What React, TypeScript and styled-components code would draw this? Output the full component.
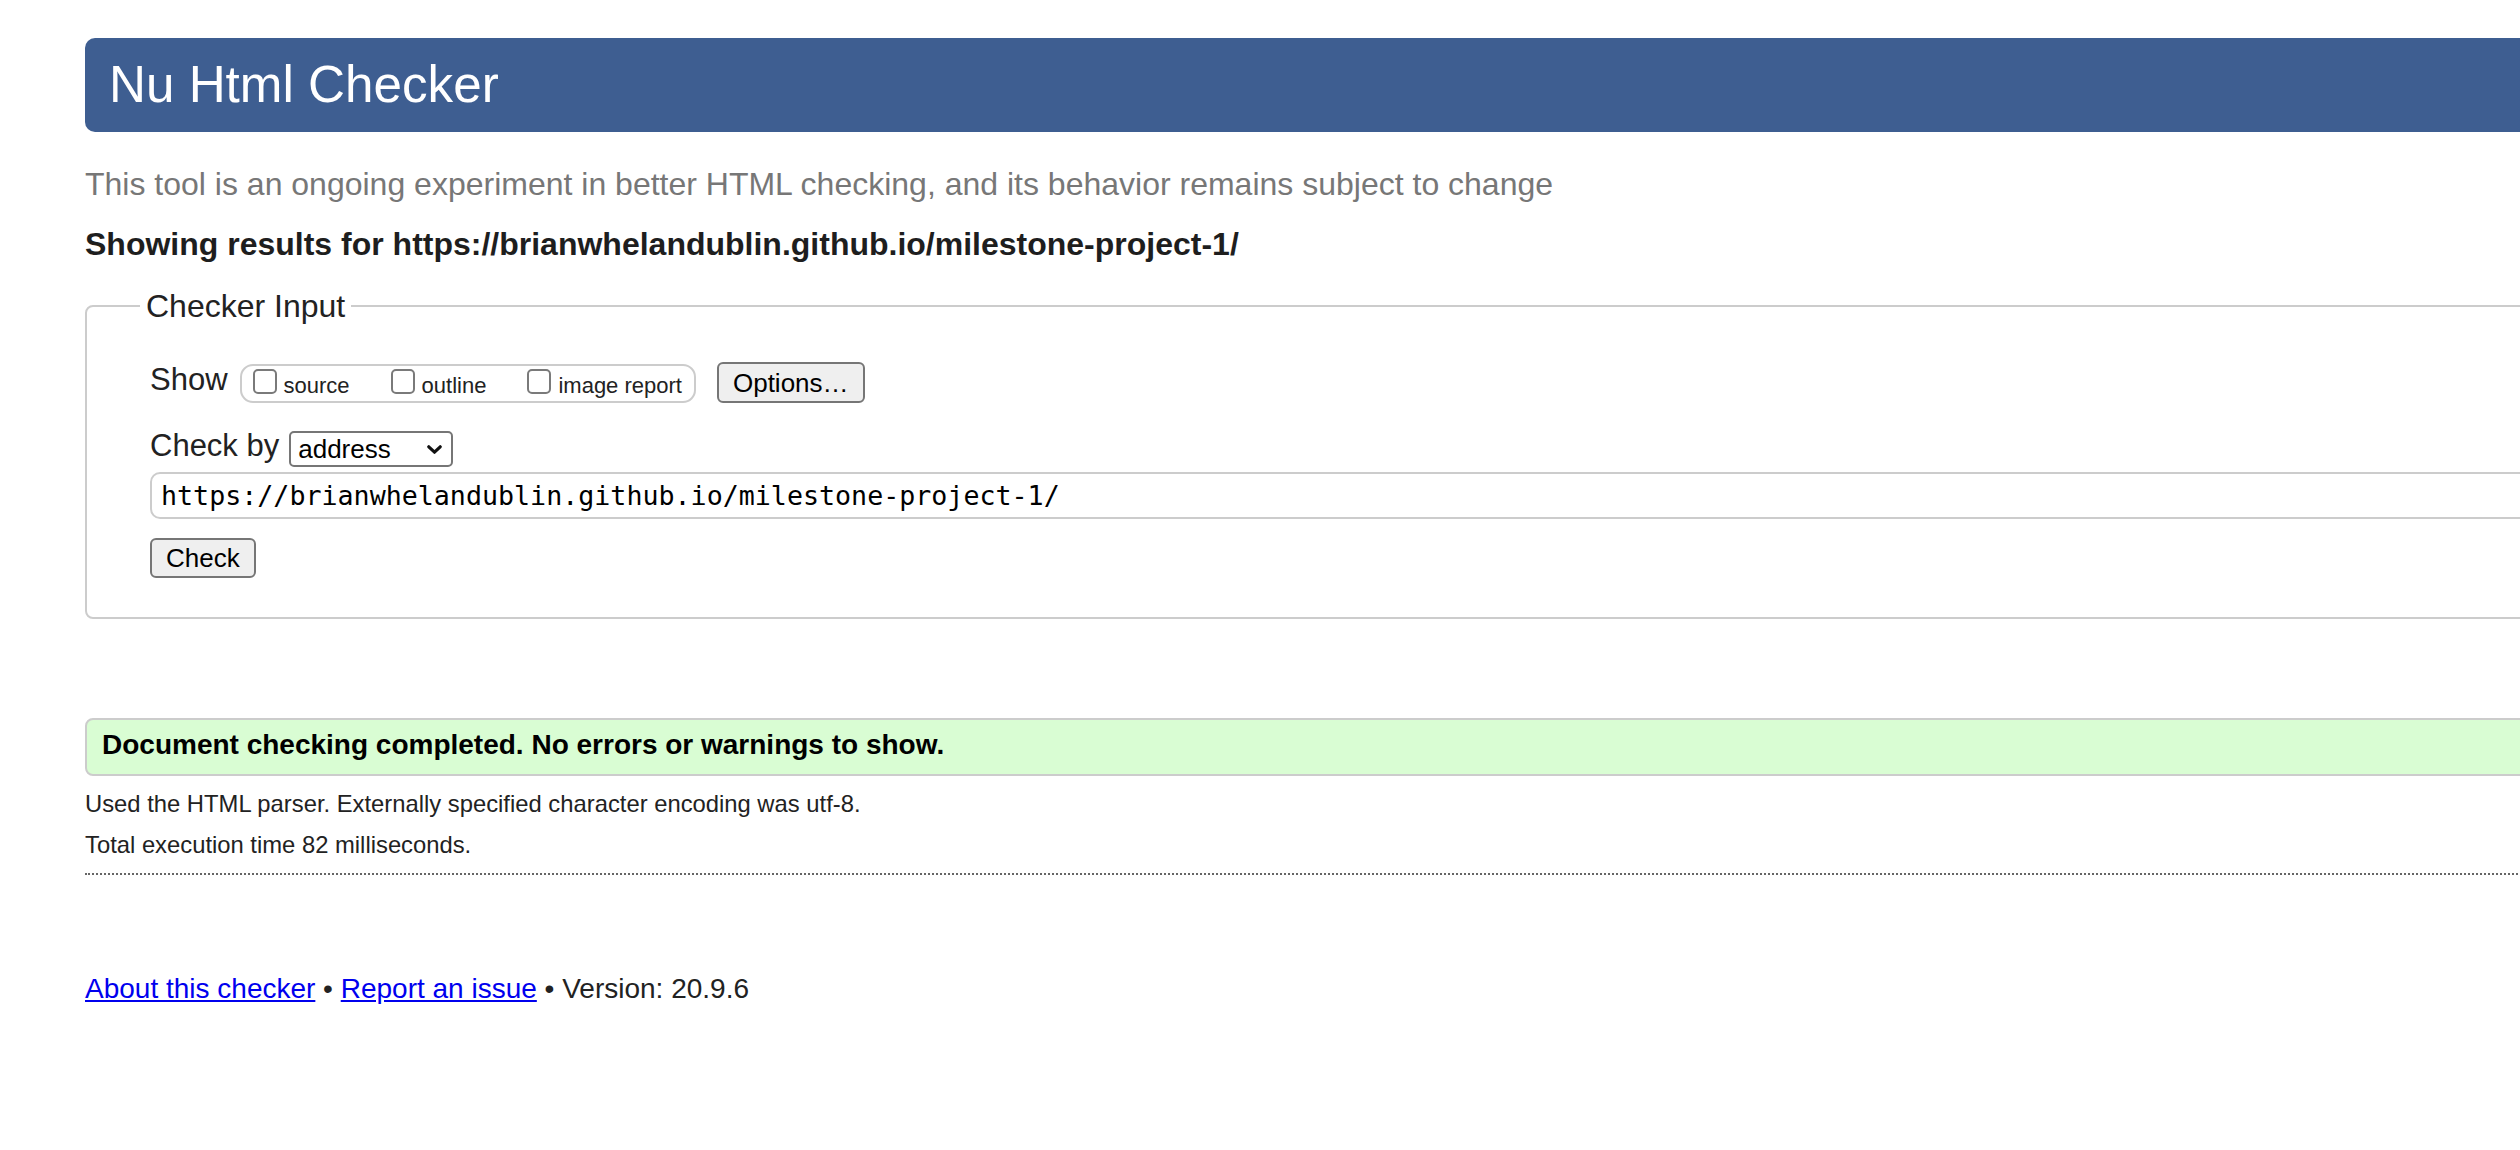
import React from 'react';
import styled, {createGlobalStyle} from 'styled-components';


const GlobalStyle = createGlobalStyle`
    html, body {
        margin: 0;
        padding: 0;
        background: #fff;
        overflow: hidden;
    }

    body {
        font-family: "Liberation Sans", Arial, Helvetica, sans-serif;
        color: #222;
    }
`;

const App = () => {
    return <>
        <GlobalStyle/>
        <Page>
            <Title>Nu Html Checker</Title>
            <Intro>This tool is an ongoing experiment in better HTML checking, and its behavior remains subject to change</Intro>
            <ResultsFor>Showing results for https://brianwhelandublin.github.io/milestone-project-1/</ResultsFor>

            <InputFieldset>
                <Legend>Checker Input</Legend>

                <Row>
                    <FieldLabel>Show</FieldLabel>
                    <OptionGroup>
                        {['source', 'outline', 'image report'].map(name => (
                            <OptionLabel key={name}>
                                <Checkbox/>
                                <span>{name}</span>
                            </OptionLabel>
                        ))}
                    </OptionGroup>
                    <Button type="button" $height={41}>Options…</Button>
                </Row>

                <Row $top={28}>
                    <FieldLabel>Check by</FieldLabel>
                    <SelectWrap>
                        <Select defaultValue="address">
                            <option value="address">address</option>
                            <option value="file">file upload</option>
                            <option value="textarea">text input</option>
                        </Select>
                        <Chevron viewBox="0 0 15 9">
                            <path d="M1.8 1.8 L7.5 7.2 L13.2 1.8" fill="none" stroke="#111" strokeWidth="3.2"
                                  strokeLinecap="round" strokeLinejoin="round"/>
                        </Chevron>
                    </SelectWrap>
                </Row>

                <UrlInput type="url" defaultValue="https://brianwhelandublin.github.io/milestone-project-1/"/>

                <Row $top={19}>
                    <Button type="submit" $height={40}>Check</Button>
                </Row>
            </InputFieldset>

            <Success>Document checking completed. No errors or warnings to show.</Success>

            <MetaList>
                <Meta>Used the HTML parser. Externally specified character encoding was utf-8.</Meta>
                <Meta>Total execution time 82 milliseconds.</Meta>
            </MetaList>

            <Divider/>

            <Footer>
                <FooterLink href="#about">About this checker</FooterLink>
                {' • '}
                <FooterLink href="#issue">Report an issue</FooterLink>
                {' • Version: 20.9.6'}
            </Footer>
        </Page>
    </>;
};

export default App;



const Page = styled.div`
    width: 2700px;
    padding: 38px 0 0 85px;
`;

const Title = styled.h1`
    margin: 0;
    height: 94px;
    padding-left: 24px;
    border-radius: 10px;
    background-color: #3e5e91;
    color: #fff;
    font-size: 51.2px;
    font-weight: normal;
    line-height: 94px;
`;

const Intro = styled.p`
    margin: 34px 0 0;
    font-size: 32px;
    line-height: 36px;
    color: #777;
`;

const ResultsFor = styled.p`
    margin: 24px 0 0;
    font-size: 32px;
    line-height: 36px;
    font-weight: bold;
    color: #1e1e1e;
`;

const InputFieldset = styled.fieldset`
    margin: 26px 0 0;
    padding: 38px 0 39px 63px;
    min-width: 0;
    border: 2px solid #ccc;
    border-radius: 8px;
`;

const Legend = styled.legend`
    margin-left: -10px;
    padding: 0 6px;
    font-size: 32px;
    line-height: 36px;
`;

const Row = styled.div<{ $top?: number }>`
    display: flex;
    align-items: center;
    margin-top: ${p => p.$top ?? 0}px;
`;

// sits a little above the row's centre line, like the original's baseline
const FieldLabel = styled.span`
    margin: 0 10px 6px 0;
    font-size: 31px;
    line-height: 30px;
`;

const OptionGroup = styled.div`
    display: flex;
    align-items: center;
    box-sizing: border-box;
    height: 39px;
    margin: 2px 21px 0 2px;
    padding: 0 12px 0 11px;
    border: 2px solid #ccc;
    border-radius: 13px;
`;

const OptionLabel = styled.label`
    display: inline-flex;
    align-items: flex-start;
    gap: 7px;
    font-size: 22px;
    line-height: 26px;

    & + & {
        margin-left: 41px;
    }

    span {
        margin-top: 4px;
    }
`;

const Checkbox = styled.input.attrs({type: 'checkbox'})`
    appearance: none;
    flex: none;
    box-sizing: border-box;
    width: 24px;
    height: 25px;
    margin: 0;
    border: 2px solid #7a7a7a;
    border-radius: 5px;
    background: #fff;
`;

const Button = styled.button<{ $height: number }>`
    box-sizing: border-box;
    height: ${p => p.$height}px;
    padding: 0 14px;
    border: 2px solid #767676;
    border-radius: 6px;
    background-color: #efefef;
    color: #000;
    font-family: "Liberation Sans", Arial, sans-serif;
    font-size: 26px;
    line-height: 30px;
`;

const SelectWrap = styled.div`
    position: relative;
    display: flex;
`;

const Select = styled.select`
    appearance: none;
    box-sizing: border-box;
    width: 164px;
    height: 36px;
    margin: 0;
    padding: 0 0 0 7px;
    border: 2px solid #767676;
    border-radius: 5px;
    background-color: #fff;
    color: #000;
    font-family: "Liberation Sans", Arial, sans-serif;
    font-size: 26px;
`;

const Chevron = styled.svg`
    position: absolute;
    top: 14px;
    right: 11px;
    width: 15px;
    height: 9px;
    pointer-events: none;
`;

const UrlInput = styled.input`
    display: block;
    box-sizing: border-box;
    width: 100%;
    height: 47px;
    margin: 5px 0 0;
    padding: 0 9px;
    border: 2px solid #ccc;
    border-radius: 10px;
    color: #000;
    font-family: "DejaVu Sans Mono", "Liberation Mono", monospace;
    font-size: 26.67px;
`;

const Success = styled.p`
    margin: 99px 0 0;
    padding: 0 0 4px 15px;
    border: 2px solid #ccc;
    border-radius: 8px;
    background-color: #d9fdd3;
    color: #000;
    font-size: 28px;
    font-weight: bold;
    line-height: 50px;
`;

const MetaList = styled.div`
    display: flex;
    flex-direction: column;
    gap: 17px;
    margin-top: 16px;
`;

const Meta = styled.p`
    margin: 0;
    font-size: 23.8px;
    line-height: 24px;
`;

const Divider = styled.hr`
    height: 0;
    margin: 16px 0 0;
    border: 0;
    border-top: 2px dotted #666;
`;

const Footer = styled.p`
    margin: 98px 0 0;
    font-size: 28px;
    line-height: 32px;
    color: #222;
`;

const FooterLink = styled.a`
    color: #0000ee;
    text-decoration: underline;
`;
